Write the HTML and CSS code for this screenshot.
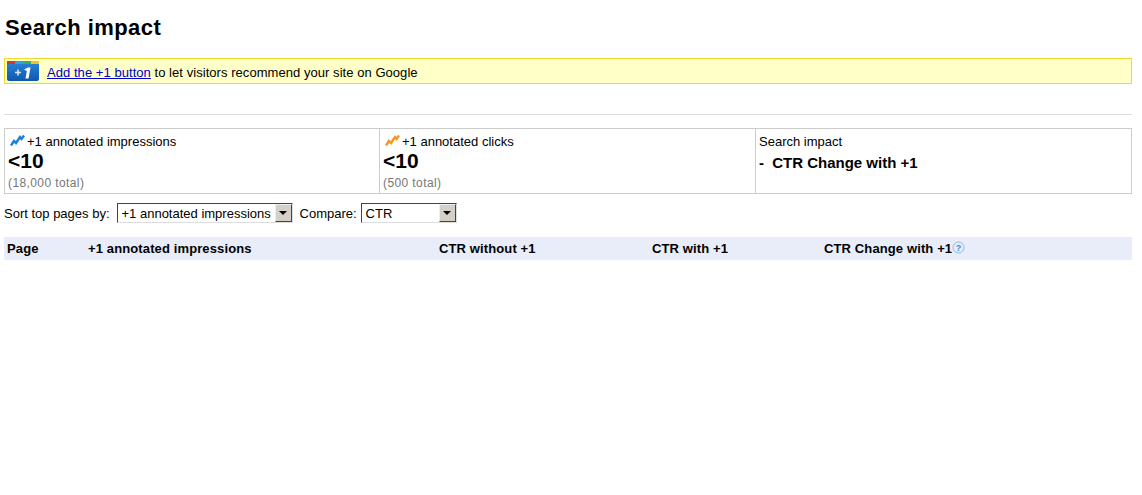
FILE: index.html
```html
<!DOCTYPE html>
<html lang="en">
  <head>
    <meta charset="UTF-8" />
    <title>Search impact</title>
    <link rel="stylesheet" href="styles.css">
  </head>
  <body>
    <h1>Search impact</h1>

    <div class="notice">
      <svg class="plus-icon" width="33" height="21" viewBox="0 0 33 21">
        <defs>
          <linearGradient id="folder" x1="0" y1="0" x2="0" y2="1">
            <stop offset="0" stop-color="#2a86dc" />
            <stop offset="1" stop-color="#0f58ac" />
          </linearGradient>
        </defs>
        <rect x="0" y="0" width="32" height="20" rx="2" fill="url(#folder)" />
        <rect x="0" y="0" width="8" height="3" fill="#d2382c" />
        <rect x="8" y="0" width="8" height="3" fill="#2ba3e4" />
        <rect x="16" y="0" width="8" height="3" fill="#4aa84c" />
        <rect x="24" y="0" width="8" height="3" fill="#f2c41c" />
        <path d="M8 11.5h6M11 8.5v6" stroke="#d4e6fa" stroke-width="1.6" />
        <path d="M17 8.5l4-2h2.5l-2 11h-3l1.4-7.5z" fill="#fff" />
      </svg>
      <span><a href="#">Add the +1 button</a> to let visitors recommend your site on Google</span>
    </div>

    <hr />

    <div class="stats">
      <div class="stat">
        <div class="stat-label">
          <svg width="15" height="13" viewBox="0 0 15 13"><path d="M1 11.5l3-4.5 2 2 4-6 1.5 2L14 1.5" fill="none" stroke="#1a80d8" stroke-width="2.4" /></svg>
          +1 annotated impressions
        </div>
        <div class="stat-value">&lt;10</div>
        <div class="stat-total">(18,000 total)</div>
      </div>
      <div class="stat">
        <div class="stat-label">
          <svg width="15" height="13" viewBox="0 0 15 13"><path d="M1 11.5l3-4.5 2 2 4-6 1.5 2L14 1.5" fill="none" stroke="#f59a1c" stroke-width="2.4" /></svg>
          +1 annotated clicks
        </div>
        <div class="stat-value">&lt;10</div>
        <div class="stat-total">(500 total)</div>
      </div>
      <div class="stat">
        <div class="stat-label">Search impact</div>
        <div class="stat-impact"><span class="dash">-</span> CTR Change with +1</div>
      </div>
    </div>

    <div class="controls">
      <label>Sort top pages by:</label>
      <div class="select-wrap select-sort">
        <select><option>+1 annotated impressions</option></select>
        <span class="arrow"></span>
      </div>
      <label class="compare-label">Compare:</label>
      <div class="select-wrap select-compare">
        <select><option>CTR</option></select>
        <span class="arrow"></span>
      </div>
    </div>

    <div class="table-head">
      <div class="col-page">Page</div>
      <div class="col-impressions">+1 annotated impressions</div>
      <div class="col-without">CTR without +1</div>
      <div class="col-with">CTR with +1</div>
      <div class="col-change">CTR Change with +1<svg class="help" width="13" height="13" viewBox="0 0 13 13"><circle cx="6.5" cy="6.5" r="5.5" fill="#e4effb" stroke="#8db8e6" /><text x="6.5" y="10" text-anchor="middle" class="help-mark">?</text></svg></div>
    </div>
  </body>
</html>
```

FILE: styles.css
```css
body {
  font-family: "Liberation Sans", Arial, sans-serif;
  font-size: 13px;
  color: #000;
  background-color: #fff;
  margin: 0;
  padding: 0 10px 0 4px;
}

h1 {
  font-size: 22px;
  letter-spacing: 0.45px;
  line-height: 24px;
  margin: 0;
  padding: 16px 0 18px 1px;
}

.notice {
  display: flex;
  align-items: center;
  gap: 7px;
  height: 24px;
  background-color: #ffffc8;
  border: 1px solid #eedc2c;
  padding-left: 2px;
  letter-spacing: 0.05px;
}

.notice span {
  padding-top: 2px;
}

.plus-icon {
  display: block;
  margin-top: 1px;
}

.notice a {
  color: #00c;
}

hr {
  border: none;
  border-top: 1px solid #ddd;
  margin: 30px 0 13px;
}

.stats {
  display: grid;
  grid-template-columns: 374px 376px 1fr;
  height: 64px;
  border: 1px solid #ccc;
}

.stat {
  padding: 4px 0 0 3px;
  border-left: 1px solid #ccc;
}

.stat:first-child {
  border-left: none;
}

.stat-label {
  display: flex;
  align-items: center;
  gap: 2px;
  height: 16px;
}

.stat-label svg {
  margin-left: 2px;
  margin-top: -2px;
}

.stat-value {
  font-size: 21px;
  font-weight: bold;
  line-height: 22px;
  padding-top: 1px;
}

.stat-total {
  color: #777;
  font-size: 12px;
  letter-spacing: 0.4px;
  line-height: 22px;
}

.stat-impact {
  font-size: 15px;
  font-weight: bold;
  line-height: 22px;
  padding-top: 3px;
}

.dash {
  margin-right: 4px;
}

.controls {
  display: flex;
  align-items: center;
  height: 20px;
  margin-top: 9px;
}

.select-wrap {
  position: relative;
  margin-left: 7px;
}

.select-sort {
  width: 176px;
}

.select-compare {
  width: 96px;
  margin-left: 4px;
}

.compare-label {
  margin-left: 7px;
}

.select-wrap select {
  appearance: none;
  display: block;
  width: 100%;
  height: 20px;
  font-family: inherit;
  font-size: 13px;
  color: #000;
  background-color: #fff;
  border: 1px solid;
  border-color: #444 #ddd #ddd #444;
  border-radius: 0;
  padding: 0 0 0 4px;
}

.arrow {
  position: absolute;
  top: 1px;
  right: 1px;
  width: 17px;
  height: 18px;
  box-sizing: border-box;
  background-color: #d4d0c8;
  border: 1px solid;
  border-color: #eee #444 #444 #eee;
}

.arrow::after {
  content: "";
  position: absolute;
  top: 6px;
  left: 3px;
  border-top: 4px solid #000;
  border-left: 4px solid transparent;
  border-right: 4px solid transparent;
}

.table-head {
  display: grid;
  grid-template-columns: 81px 351px 213px 172px 1fr;
  align-items: center;
  height: 23px;
  margin-top: 14px;
  padding-left: 3px;
  background-color: #e9edf9;
  font-weight: bold;
  letter-spacing: 0.12px;
}

.col-change {
  display: flex;
  align-items: center;
}

.help {
  display: block;
  margin-top: -2px;
}

.help-mark {
  font-size: 9px;
  font-weight: bold;
  letter-spacing: 0;
  fill: #3a83d6;
}
```
